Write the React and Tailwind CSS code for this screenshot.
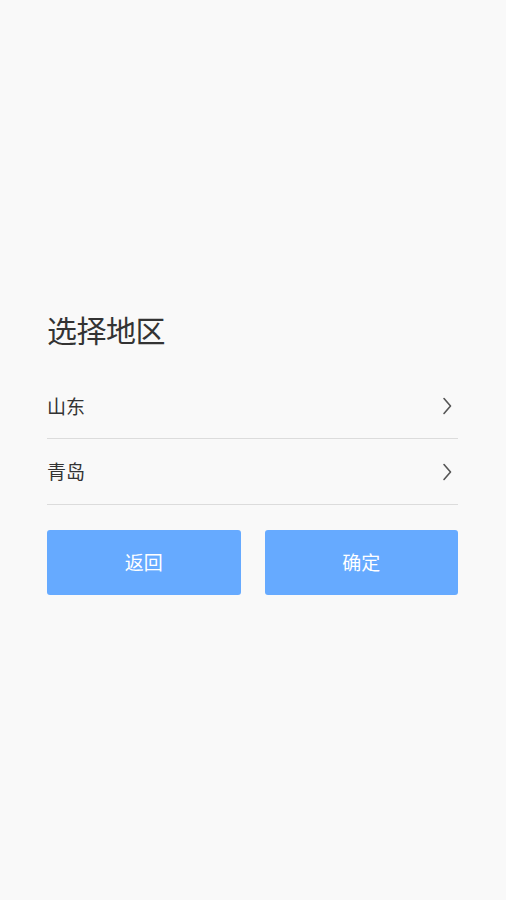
export default function App() {
  const font = { fontFamily: '"Noto Sans CJK SC", "Noto Sans", sans-serif' };
  const Chevron = () => (
    <svg width="10" height="18" viewBox="0 0 10 18" fill="none" className="shrink-0">
      <path d="M2 1.5 L8.5 9 L2 16.5" stroke="#555" strokeWidth="1.6" strokeLinecap="round" strokeLinejoin="round" />
    </svg>
  );
  return (
    <div className="w-[506px] h-[900px] bg-[#f9f9f9] flex flex-col pl-[47px] pr-[48px] pt-[302px]" style={font}>
      <div className="text-[30px] leading-[54px] text-[#333] tracking-[-0.5px]">选择地区</div>
      <div className="mt-[18px] flex flex-col">
        <div className="flex items-center justify-between h-[65px] border-b-[1.5px] border-[#dcdcdc] pr-[6px]">
          <span className="text-[19px] text-[#333]">山东</span>
          <Chevron />
        </div>
        <div className="flex items-center justify-between h-[66px] border-b-[1.5px] border-[#dcdcdc] pr-[6px]">
          <span className="text-[19px] text-[#333]">青岛</span>
          <Chevron />
        </div>
      </div>
      <div className="mt-[25px] flex gap-[24px]">
        <button className="flex-1 h-[65px] rounded-[3px] bg-[#66aaff] text-white text-[19px] flex items-center justify-center">返回</button>
        <button className="flex-1 h-[65px] rounded-[3px] bg-[#66aaff] text-white text-[19px] flex items-center justify-center">确定</button>
      </div>
    </div>
  );
}
